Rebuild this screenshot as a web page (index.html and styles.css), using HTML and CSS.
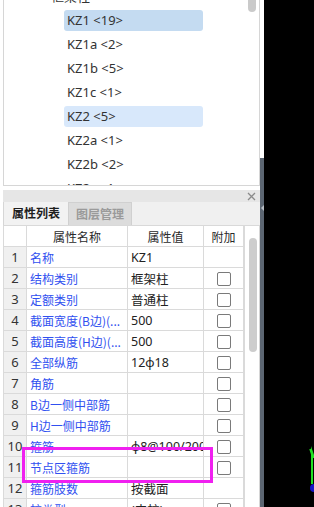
FILE: index.html
```html
<!DOCTYPE html>
<html lang="zh-CN">
<head>
  <meta charset="UTF-8">
  <title>构件列表 - 属性</title>
  <link rel="stylesheet" href="styles.css">
</head>
<body>
  <div class="side">
    <div class="tree">
      <ul class="tree-list">
        <li class="node group">框架柱</li>
        <li class="node selected">KZ1 &lt;19&gt;</li>
        <li class="node">KZ1a &lt;2&gt;</li>
        <li class="node">KZ1b &lt;5&gt;</li>
        <li class="node">KZ1c &lt;1&gt;</li>
        <li class="node hover">KZ2 &lt;5&gt;</li>
        <li class="node">KZ2a &lt;1&gt;</li>
        <li class="node">KZ2b &lt;2&gt;</li>
        <li class="node">KZ2c &lt;1&gt;</li>
      </ul>
      <div class="tree-thumb"></div>
    </div>

    <div class="dock-bar">
      <svg class="close" width="9" height="9" viewBox="0 0 9 9">
        <path d="M1 1L8 8M8 1L1 8" stroke="#8a8a8a" stroke-width="1.3"/>
      </svg>
    </div>

    <div class="tabs">
      <div class="tab active">属性列表</div>
      <div class="tab">图层管理</div>
    </div>

    <div class="props">
      <table class="grid">
        <colgroup>
          <col class="c-no"><col class="c-name"><col class="c-val"><col class="c-add">
        </colgroup>
        <thead>
          <tr><th></th><th>属性名称</th><th>属性值</th><th>附加</th></tr>
        </thead>
        <tbody>
          <tr><td class="no">1</td><td class="name">名称</td><td class="val">KZ1</td><td></td></tr>
          <tr><td class="no">2</td><td class="name">结构类别</td><td class="val">框架柱</td><td><span class="check"></span></td></tr>
          <tr><td class="no">3</td><td class="name">定额类别</td><td class="val">普通柱</td><td><span class="check"></span></td></tr>
          <tr><td class="no">4</td><td class="name">截面宽度(B边)(...</td><td class="val">500</td><td><span class="check"></span></td></tr>
          <tr><td class="no">5</td><td class="name">截面高度(H边)(...</td><td class="val">500</td><td><span class="check"></span></td></tr>
          <tr><td class="no">6</td><td class="name">全部纵筋</td><td class="val">12ф18</td><td><span class="check"></span></td></tr>
          <tr><td class="no">7</td><td class="name">角筋</td><td class="val"></td><td><span class="check"></span></td></tr>
          <tr><td class="no">8</td><td class="name">B边一侧中部筋</td><td class="val"></td><td><span class="check"></span></td></tr>
          <tr><td class="no">9</td><td class="name">H边一侧中部筋</td><td class="val"></td><td><span class="check"></span></td></tr>
          <tr><td class="no">10</td><td class="name">箍筋</td><td class="val">ф8@100/200(4*4)</td><td><span class="check"></span></td></tr>
          <tr><td class="no">11</td><td class="name">节点区箍筋</td><td class="val"></td><td><span class="check"></span></td></tr>
          <tr><td class="no">12</td><td class="name">箍筋肢数</td><td class="val">按截面</td><td></td></tr>
          <tr><td class="no">13</td><td class="name">柱类型</td><td class="val">(中柱)</td><td><span class="check"></span></td></tr>
        </tbody>
      </table>
      <div class="vscroll"><div class="vthumb"></div></div>
    </div>
  </div>

  <div class="splitter"><span class="notch"></span></div>

  <div class="viewport">
    <svg class="axis" width="10" height="50" viewBox="0 0 10 50">
      <path d="M4 0L8 12L6 12L6 38L4 38Z" fill="#22e022"/>
      <path d="M3 3L6 12" stroke="#22e022" stroke-width="1.5"/>
      <circle cx="7" cy="42" r="4" fill="#1515c8"/>
    </svg>
  </div>

  <div class="mark"></div>
</body>
</html>
```

FILE: styles.css
```css
body {
  margin: 0;
  width: 314px;
  height: 507px;
  overflow: hidden;
  display: flex;
  background: #ffffff;
  font-family: "Noto Sans", "Noto Sans CJK SC", sans-serif;
  color: #222;
  position: relative;
}

.side {
  width: 257px;
  padding-left: 3px;
  display: flex;
  flex-direction: column;
}

/* component tree */
.tree {
  height: 185px;
  border-left: 1px solid #d6d6d6;
  border-right: 1px solid #d6d6d6;
  border-bottom: 1px solid #d6d6d6;
  position: relative;
  overflow: hidden;
  flex-shrink: 0;
}

.tree-list {
  list-style: none;
  margin: -14px 0 0 0;
  padding: 0;
}

.node {
  height: 21px;
  line-height: 21px;
  margin: 0 0 3px 60px;
  width: 139px;
  padding-left: 3px;
  box-sizing: border-box;
  border-radius: 3px;
  font-size: 13px;
  color: #333;
  white-space: pre;
}

.node.group {
  margin-left: 44px;
}

.node.selected {
  background: #c4dbf1;
}

.node.hover {
  background: #d8e8fb;
}

.tree-thumb {
  position: absolute;
  top: -6px;
  left: 244px;
  width: 8px;
  height: 18px;
  border-radius: 4px;
  background: #cacaca;
}

/* dock header */
.dock-bar {
  margin-top: 4px;
  height: 12px;
  background: #e6e6e6;
  display: flex;
  justify-content: flex-end;
  align-items: center;
  padding-right: 4px;
  flex-shrink: 0;
}

.tabs {
  height: 23px;
  background: #f0f0f0;
  display: flex;
  flex-shrink: 0;
}

.tab {
  width: 64px;
  height: 23px;
  line-height: 22px;
  text-align: center;
  font-size: 12px;
  font-weight: bold;
  box-sizing: border-box;
  font-family: "Noto Sans CJK SC", sans-serif;
}

.tab.active {
  width: 65px;
  background: #f2f2f2;
  color: #1e1e1e;
  border-left: 1px solid #d6d6d6;
}

.tab:not(.active) {
  background: #dcdcdc;
  color: #9a9a9a;
  border: 1px solid #d0d0d0;
  border-bottom: none;
}

/* property grid */
.props {
  display: flex;
  flex: 1;
  border-top: 1px solid #d9d9d9;
  border-right: 1px solid #d6d6d6;
}

.grid {
  width: 240px;
  border-collapse: collapse;
  table-layout: fixed;
  font-size: 12px;
  align-self: flex-start;
}

.c-no { width: 23px; }
.c-name { width: 101px; }
.c-val { width: 76px; }
.c-add { width: 40px; }

.grid th,
.grid td {
  height: 20px;
  padding: 0 0 0 3px;
  border: 1px solid #dadada;
  white-space: nowrap;
  overflow: hidden;
}

.grid tr:first-child th { border-top: none; }

.grid th {
  font-weight: normal;
  font-family: "Noto Sans CJK SC", sans-serif;
  text-align: center;
  padding: 0;
  color: #2a2a2a;
}

.grid td.no {
  background: #f0f0f0;
  text-align: center;
  padding: 0;
  font-size: 13px;
  color: #333;
}

.grid td.name {
  color: #3050f0;
  font-family: "Noto Sans CJK SC", sans-serif;
}

.grid td.val {
  color: #222;
  font-size: 12.5px;
}

.grid td:last-child {
  text-align: center;
  padding: 0;
}

.check {
  display: inline-block;
  width: 12px;
  height: 12px;
  border: 1px solid #7a7a7a;
  border-radius: 2px;
  vertical-align: middle;
  background: #fff;
}

.vscroll {
  flex: 1;
  position: relative;
  border-left: 1px solid #dadada;
}

.vthumb {
  position: absolute;
  top: 12px;
  left: 4px;
  width: 8px;
  height: 114px;
  border-radius: 4px;
  background: #cdcdcd;
}

/* splitter and 3d view */
.splitter {
  width: 4px;
  background: linear-gradient(#ffffff 0, #ffffff 158px, #5c6672 158px);
  position: relative;
}

.notch {
  position: absolute;
  top: 205px;
  left: 1px;
  width: 0;
  height: 0;
  border-top: 3px solid transparent;
  border-bottom: 3px solid transparent;
  border-right: 3px solid #b8bec6;
}

.viewport {
  flex: 1;
  background: #000;
  position: relative;
}

.axis {
  position: absolute;
  left: 43px;
  top: 446px;
}

.mark {
  position: absolute;
  left: 22px;
  top: 447px;
  width: 185px;
  height: 30px;
  border: 3px solid #f020f0;
}
```
